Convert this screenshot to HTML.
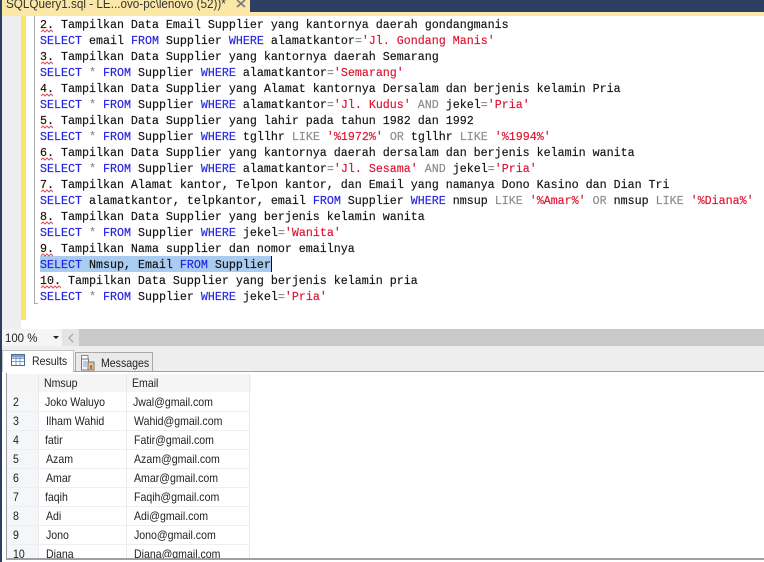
<!DOCTYPE html>
<html><head><meta charset="utf-8">
<style>
html,body{margin:0;padding:0;background:#fff}
#p{position:relative;width:764px;height:562px;overflow:hidden;background:#fff}
#p div{position:absolute}
.l{left:40px;height:16px;font:11.67px/16px "Liberation Mono",monospace;color:#111;white-space:pre;-webkit-text-stroke:0.15px;margin-top:1px}
.k{color:#2222e0}.g{color:#8a8a8a}.s{color:#dd1130}
.c{font:12px/19px "Liberation Sans",sans-serif;color:#222;white-space:nowrap;height:19px;transform:scaleX(.88);transform-origin:0 0;margin-top:1px}
.t{font:12px/14px "Liberation Sans",sans-serif;color:#222;white-space:nowrap;transform:scaleX(.88);transform-origin:0 0}
.r{left:7px;width:242px;height:1px;background:#edf0f3}
</style></head><body><div id="p">
<!-- top -->
<div style="left:0;top:0;width:764px;height:12px;background:#2c3f60"></div>
<div style="left:2px;top:0;width:248px;height:12px;background:#fbe7a6"></div>
<div style="left:2px;top:12px;width:762px;height:4px;background:#fbe7a6"></div>
<div style="left:6px;top:-5px;font:13px/18px 'Liberation Sans',sans-serif;color:#333;white-space:nowrap;transform:scaleX(.9);transform-origin:0 0">SQLQuery1.sql - LE...ovo-pc\lenovo (52))*</div>
<svg style="position:absolute;left:236px;top:0" width="11" height="8" viewBox="0 0 11 8"><path d="M1 0L9 7M9 0L1 7" stroke="#777" stroke-width="1.6" fill="none"/></svg>
<!-- frame left -->
<div style="left:2px;top:16px;width:19px;height:313px;background:#eeeeee"></div>
<div style="left:21px;top:16px;width:5px;height:304px;background:#f8e868"></div>
<div style="left:34px;top:16px;width:1px;height:288px;background:#aaa"></div>
<div style="left:34px;top:303px;width:4px;height:1px;background:#aaa"></div>
<!-- highlight -->
<div style="left:40px;top:256px;width:232px;height:16px;background:#a9ccf0"></div>
<div style="left:271px;top:256px;width:1px;height:16px;background:#111"></div>
<!-- code -->
<div class="l" style="top:16px">2. Tampilkan Data Email Supplier yang kantornya daerah gondangmanis</div>
<div class="l" style="top:32px"><span class="k">SELECT</span> email <span class="k">FROM</span> Supplier <span class="k">WHERE</span> alamatkantor<span class="g">=</span><span class="s">'Jl. Gondang Manis'</span></div>
<div class="l" style="top:48px">3. Tampilkan Data Supplier yang kantornya daerah Semarang</div>
<div class="l" style="top:64px"><span class="k">SELECT</span> <span class="g">*</span> <span class="k">FROM</span> Supplier <span class="k">WHERE</span> alamatkantor<span class="g">=</span><span class="s">'Semarang'</span></div>
<div class="l" style="top:80px">4. Tampilkan Data Supplier yang Alamat kantornya Dersalam dan berjenis kelamin Pria</div>
<div class="l" style="top:96px"><span class="k">SELECT</span> <span class="g">*</span> <span class="k">FROM</span> Supplier <span class="k">WHERE</span> alamatkantor<span class="g">=</span><span class="s">'Jl. Kudus'</span> <span class="g">AND</span> jekel<span class="g">=</span><span class="s">'Pria'</span></div>
<div class="l" style="top:112px">5. Tampilkan Data Supplier yang lahir pada tahun 1982 dan 1992</div>
<div class="l" style="top:128px"><span class="k">SELECT</span> <span class="g">*</span> <span class="k">FROM</span> Supplier <span class="k">WHERE</span> tgllhr <span class="g">LIKE</span> <span class="s">'%1972%'</span> <span class="g">OR</span> tgllhr <span class="g">LIKE</span> <span class="s">'%1994%'</span></div>
<div class="l" style="top:144px">6. Tampilkan Data Supplier yang kantornya daerah dersalam dan berjenis kelamin wanita</div>
<div class="l" style="top:160px"><span class="k">SELECT</span> <span class="g">*</span> <span class="k">FROM</span> Supplier <span class="k">WHERE</span> alamatkantor<span class="g">=</span><span class="s">'Jl. Sesama'</span> <span class="g">AND</span> jekel<span class="g">=</span><span class="s">'Pria'</span></div>
<div class="l" style="top:176px">7. Tampilkan Alamat kantor, Telpon kantor, dan Email yang namanya Dono Kasino dan Dian Tri</div>
<div class="l" style="top:192px"><span class="k">SELECT</span> alamatkantor, telpkantor, email <span class="k">FROM</span> Supplier <span class="k">WHERE</span> nmsup <span class="g">LIKE</span> <span class="s">'%Amar%'</span> <span class="g">OR</span> nmsup <span class="g">LIKE</span> <span class="s">'%Diana%'</span></div>
<div class="l" style="top:208px">8. Tampilkan Data Supplier yang berjenis kelamin wanita</div>
<div class="l" style="top:224px"><span class="k">SELECT</span> <span class="g">*</span> <span class="k">FROM</span> Supplier <span class="k">WHERE</span> jekel<span class="g">=</span><span class="s">'Wanita'</span></div>
<div class="l" style="top:240px">9. Tampilkan Nama supplier dan nomor emailnya</div>
<div class="l" style="top:256px"><span class="k">SELECT</span> Nmsup, Email <span class="k">FROM</span> Supplier</div>
<div class="l" style="top:272px">10. Tampilkan Data Supplier yang berjenis kelamin pria</div>
<div class="l" style="top:288px"><span class="k">SELECT</span> <span class="g">*</span> <span class="k">FROM</span> Supplier <span class="k">WHERE</span> jekel<span class="g">=</span><span class="s">'Pria'</span></div>
<!-- squiggles -->
<svg style="position:absolute;left:0;top:0" width="764" height="320" viewBox="0 0 764 320" fill="none" stroke="#e05050" stroke-width="1">
<path d="M41 32l2-2 2 2 2-2 2 2 2-2 2 2"/>
<path d="M41 64l2-2 2 2 2-2 2 2 2-2 2 2"/>
<path d="M41 96l2-2 2 2 2-2 2 2 2-2 2 2"/>
<path d="M41 128l2-2 2 2 2-2 2 2 2-2 2 2"/>
<path d="M41 160l2-2 2 2 2-2 2 2 2-2 2 2"/>
<path d="M41 192l2-2 2 2 2-2 2 2 2-2 2 2"/>
<path d="M41 224l2-2 2 2 2-2 2 2 2-2 2 2"/>
<path d="M41 256l2-2 2 2 2-2 2 2 2-2 2 2"/>
<path d="M41 288l2-2 2 2 2-2 2 2 2-2 2 2 2-2 2 2 2-2 2 2"/>
</svg>
<!-- zoom bar -->
<div style="left:2px;top:329px;width:762px;height:17px;background:#c9c9c9"></div>
<div style="left:2px;top:329px;width:60px;height:17px;background:#f5f5f5"></div>
<div style="left:62px;top:329px;width:17px;height:17px;background:#e4e4e4"></div>
<div style="left:5px;top:330px;font:12px/16px 'Liberation Sans',sans-serif;color:#222;transform:scaleX(.95);transform-origin:0 0">100 %</div>
<div style="left:53px;top:336px;width:0;height:0;border:3px solid transparent;border-top:3px solid #222"></div>
<svg style="position:absolute;left:67px;top:333px" width="8" height="10" viewBox="0 0 8 10"><path d="M6 1L2 5L6 9" stroke="#aaa" stroke-width="1.4" fill="none"/></svg>
<!-- tab strip -->
<div style="left:2px;top:346px;width:762px;height:26px;background:#eeeeee"></div>
<div style="left:2px;top:371px;width:762px;height:1px;background:#a0a0a0"></div>
<div style="left:2px;top:372px;width:762px;height:190px;background:#fff"></div>
<div style="left:2px;top:350px;width:72px;height:22px;background:#fff;border:1px solid #c4c4c4;border-bottom:0;box-sizing:border-box"></div>
<div style="left:75px;top:352px;width:78px;height:19px;background:#eaeaea;border:1px solid #a8a8a8;border-bottom:0;box-sizing:border-box"></div>
<svg style="position:absolute;left:11px;top:354px" width="14" height="12" viewBox="0 0 14 12"><rect x=".5" y=".5" width="13" height="11" fill="#fff" stroke="#4a6a90"/><rect x="1" y="1" width="12" height="2.5" fill="#7f9fc6"/><path d="M5 1V11M9 1V11M1 4.5H13M1 7.5H13" stroke="#7f9fc6" fill="none"/></svg>
<svg style="position:absolute;left:80px;top:355px" width="15" height="16" viewBox="0 0 15 16"><path d="M1.5 .5H8V4H1.5Z" fill="#fff" stroke="#888"/><rect x="1.5" y="4" width="7" height="11" fill="#f4f4f4" stroke="#777"/><rect x="8" y="7" width="6" height="8" fill="#d9c9a0" stroke="#777"/><path d="M3 7H7M3 9H7M3 11H7" stroke="#8aa4c8"/><rect x="10" y="10" width="2" height="4" fill="#c86030"/></svg>
<div class="t" style="left:32px;top:354px">Results</div>
<div class="t" style="left:101px;top:356px">Messages</div>
<!-- grid -->
<div style="left:6px;top:373px;width:1px;height:185px;background:#9aa0a8"></div>
<div style="left:7px;top:374px;width:244px;height:18px;background:#f5f5f5"></div>
<div style="left:7px;top:392px;width:32px;height:166px;background:#f5f6f8"></div>
<div style="left:38px;top:374px;width:1px;height:184px;background:#e6e9ed"></div>
<div style="left:126px;top:374px;width:1px;height:184px;background:#e6e9ed"></div>
<div style="left:249px;top:374px;width:1px;height:184px;background:#e6e9ed"></div>
<div class="r" style="top:411px"></div><div class="r" style="top:430px"></div><div class="r" style="top:449px"></div><div class="r" style="top:468px"></div><div class="r" style="top:487px"></div><div class="r" style="top:506px"></div><div class="r" style="top:525px"></div><div class="r" style="top:544px"></div>
<div class="c" style="left:44px;top:373px">Nmsup</div><div class="c" style="left:132px;top:373px">Email</div>
<div class="c" style="left:13px;top:392px">2</div><div class="c" style="left:45px;top:392px">Joko Waluyo</div><div class="c" style="left:133px;top:392px">Jwal@gmail.com</div>
<div class="c" style="left:13px;top:411px">3</div><div class="c" style="left:46px;top:411px">Ilham Wahid</div><div class="c" style="left:134px;top:411px">Wahid@gmail.com</div>
<div class="c" style="left:13px;top:430px">4</div><div class="c" style="left:45px;top:430px">fatir</div><div class="c" style="left:134px;top:430px">Fatir@gmail.com</div>
<div class="c" style="left:13px;top:449px">5</div><div class="c" style="left:46px;top:449px">Azam</div><div class="c" style="left:134px;top:449px">Azam@gmail.com</div>
<div class="c" style="left:13px;top:468px">6</div><div class="c" style="left:46px;top:468px">Amar</div><div class="c" style="left:134px;top:468px">Amar@gmail.com</div>
<div class="c" style="left:13px;top:487px">7</div><div class="c" style="left:45px;top:487px">faqih</div><div class="c" style="left:134px;top:487px">Faqih@gmail.com</div>
<div class="c" style="left:13px;top:506px">8</div><div class="c" style="left:46px;top:506px">Adi</div><div class="c" style="left:134px;top:506px">Adi@gmail.com</div>
<div class="c" style="left:13px;top:525px">9</div><div class="c" style="left:46px;top:525px">Jono</div><div class="c" style="left:134px;top:525px">Jono@gmail.com</div>
<div style="left:2px;top:544px;width:250px;height:14px;overflow:hidden">
<div class="c" style="left:11px;top:0">10</div><div class="c" style="left:44px;top:0">Diana</div><div class="c" style="left:132px;top:0">Diana@gmail.com</div>
</div>
<!-- bottom -->
<div style="left:6px;top:558px;width:758px;height:2px;background:#a0a0a0"></div>
<div style="left:0;top:0;width:2px;height:562px;background:#2c3f60"></div>
</div></body></html>
